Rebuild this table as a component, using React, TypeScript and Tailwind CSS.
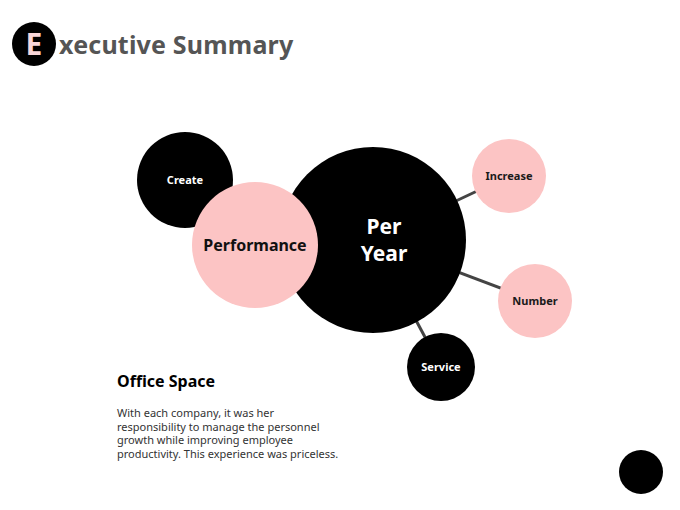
const font = { fontFamily: '"Noto Sans", "Open Sans", sans-serif' };

type Node = {
  label: string;
  cx: number;
  cy: number;
  r: number;
  tone: "dark" | "pink";
};

// satellite bubbles of the diagram, placed on the canvas by their centre
const nodes: Node[] = [
  { label: "Create", cx: 185, cy: 180, r: 48, tone: "dark" },
  { label: "Increase", cx: 509, cy: 176, r: 37, tone: "pink" },
  { label: "Number", cx: 535, cy: 301, r: 37, tone: "pink" },
  { label: "Service", cx: 441, cy: 367, r: 34, tone: "dark" },
];

const hub = { cx: 373, cy: 240, r: 93 };

function Bubble({ node }: { node: Node }) {
  return (
    <div
      className={`absolute flex items-center justify-center rounded-full text-[11px] font-bold ${
        node.tone === "dark" ? "bg-black text-white" : "bg-[#fcc4c4] text-[#1a1a1a]"
      }`}
      style={{
        left: node.cx - node.r,
        top: node.cy - node.r,
        width: node.r * 2,
        height: node.r * 2,
      }}
    >
      {node.label}
    </div>
  );
}

function Diagram() {
  return (
    <div className="pointer-events-none absolute inset-0">
      <svg className="absolute inset-0" width={680} height={510}>
        {nodes.slice(1).map((n) => (
          <line
            key={n.label}
            x1={hub.cx}
            y1={hub.cy}
            x2={n.cx}
            y2={n.cy}
            stroke="#444"
            strokeWidth={3}
          />
        ))}
      </svg>

      {nodes.map((n) => (
        <Bubble key={n.label} node={n} />
      ))}

      <div
        className="absolute flex items-center justify-center rounded-full bg-black"
        style={{ left: hub.cx - hub.r, top: hub.cy - hub.r, width: hub.r * 2, height: hub.r * 2 }}
      >
        <div className="pl-[22px] text-center text-[21px] font-bold leading-[27px] text-white">
          Per
          <br />
          Year
        </div>
      </div>

      <div className="absolute left-[192px] top-[182px] flex h-[126px] w-[126px] items-center justify-center rounded-full bg-[#fcc4c4] text-[16px] font-bold text-[#111]">
        Performance
      </div>
    </div>
  );
}

export default function App() {
  return (
    <div className="relative flex h-[510px] w-[680px] flex-col overflow-hidden bg-white" style={font}>
      <Diagram />

      <header className="relative flex items-center pl-3 pt-[22px]">
        <div className="flex h-[44px] w-[44px] items-center justify-center rounded-full bg-black text-[30px] font-bold leading-none text-[#f9d6d9]">
          E
        </div>
        <h1 className="ml-[3px] text-[25px] font-bold leading-none tracking-[0.2px] text-[#555]">
          xecutive Summary
        </h1>
      </header>

      <div className="relative mt-auto flex items-end justify-between pb-4 pl-[117px] pr-[17px]">
        <section className="w-[240px] pb-[34px]">
          <h2 className="text-[16px] font-bold leading-[22px] text-black">Office Space</h2>
          <p className="mt-[14px] text-[11px] leading-[13.5px] text-[#333]">
            With each company, it was her
            <br />
            responsibility to manage the personnel
            <br />
            growth while improving employee
            <br />
            productivity. This experience was priceless.
          </p>
        </section>

        <div className="h-[44px] w-[44px] rounded-full bg-black" />
      </div>
    </div>
  );
}
